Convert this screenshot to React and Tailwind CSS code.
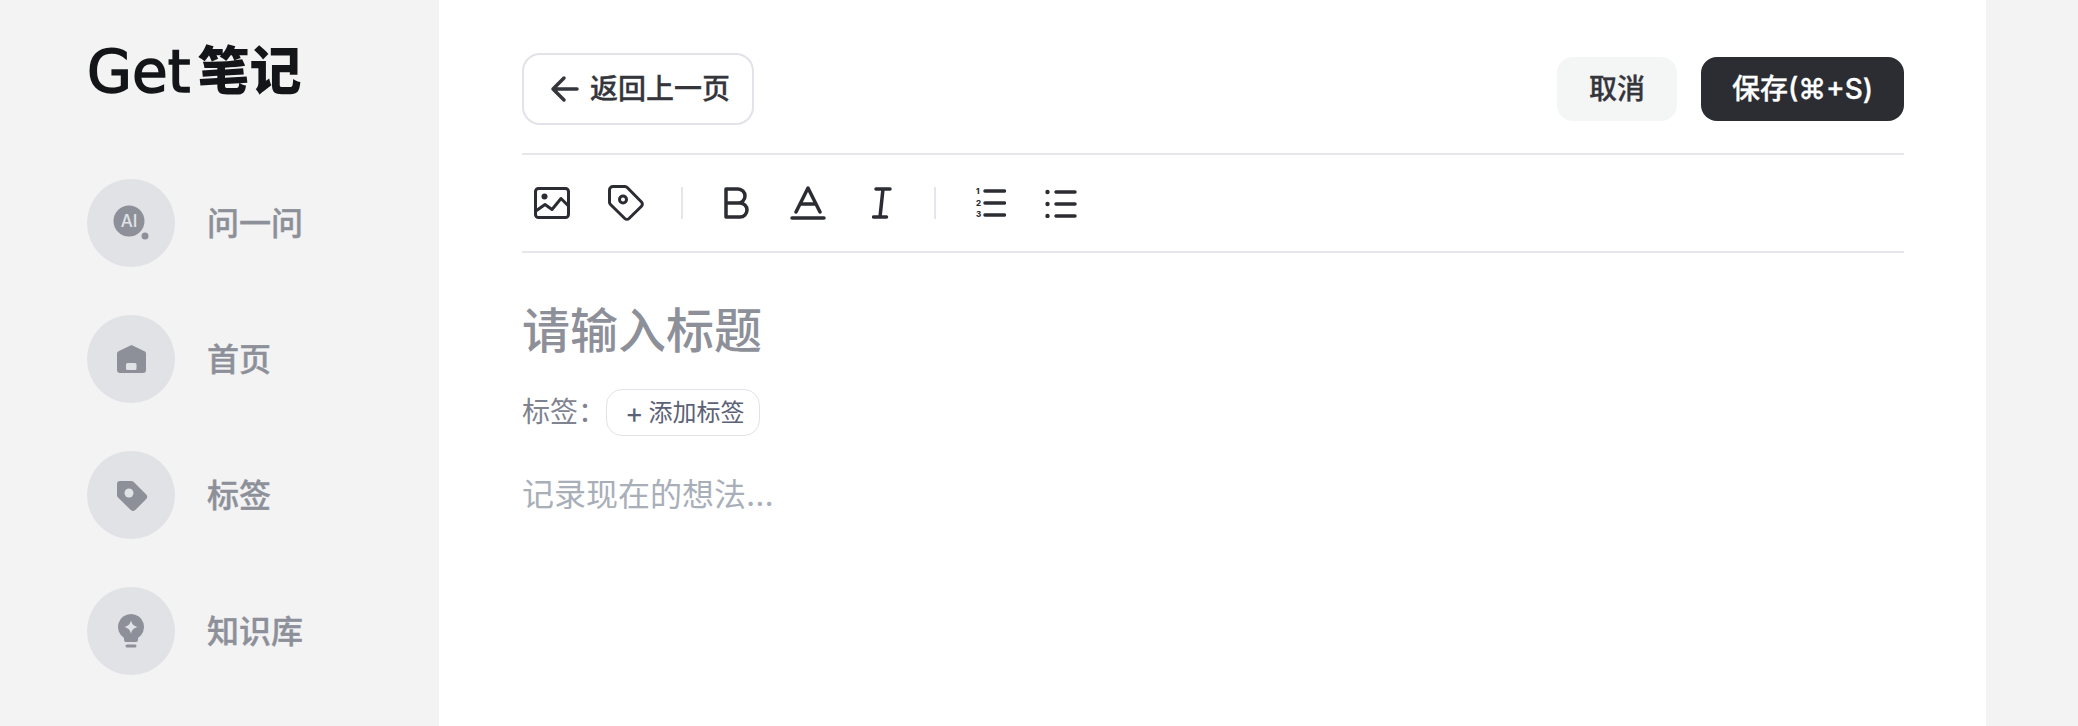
import React from 'react';

const navItems = [
  { label: '问一问', icon: <AiIcon /> },
  { label: '首页', icon: <HomeIcon /> },
  { label: '标签', icon: <TagFillIcon /> },
  { label: '知识库', icon: <BulbIcon /> },
];

function AiIcon() {
  return (
    <svg width="48" height="48" viewBox="0 0 48 48">
      <circle cx="22" cy="22" r="15.5" fill="#8d9099" />
      <text x="22" y="28" textAnchor="middle" fontSize="17" fontWeight="500" fontFamily="Inter, sans-serif" fill="#e1e2e6">AI</text>
      <circle cx="38" cy="37" r="3.5" fill="#8d9099" />
    </svg>
  );
}

function HomeIcon() {
  return (
    <svg width="48" height="48" viewBox="0 0 48 48">
      <path d="M24.5 10 38 16.500a2.500 2.500 0 0 1 1 2V35a3 3 0 0 1-3 3H13a3 3 0 0 1-3-3V18.500a2.500 2.500 0 0 1 1-2z" fill="#8d9099" />
      <rect x="19" y="28" width="10.500" height="7" rx="1.500" fill="#e1e2e6" />
    </svg>
  );
}

function TagFillIcon() {
  return (
    <svg width="48" height="48" viewBox="0 0 48 48">
      <path d="M13 10h11a4 4 0 0 1 3 1.200l12 12a3.500 3.500 0 0 1 0 5L28.500 38.800a3.500 3.500 0 0 1-5 0L11 26.500a4 4 0 0 1-1-3V13a3 3 0 0 1 3-3z" fill="#8d9099" />
      <circle cx="22" cy="22" r="4.500" fill="#e1e2e6" />
    </svg>
  );
}

function BulbIcon() {
  return (
    <svg width="48" height="48" viewBox="0 0 48 48">
      <path d="M24 7a13 13 0 0 1 7 24v2a2 2 0 0 1-2 2H19a2 2 0 0 1-2-2v-2a13 13 0 0 1 7-24z" fill="#8d9099" />
      <path d="M24 13c.7 4 2.200 5.500 6.500 7-4.300 1.500-5.800 3-6.500 7-.7-4-2.200-5.500-6.500-7 4.300-1.500 5.800-3 6.500-7z" fill="#e1e2e6" />
      <rect x="18.500" y="37.500" width="11" height="3" rx="1.500" fill="#8d9099" />
    </svg>
  );
}

function ImageIcon() {
  return (
    <svg width="36" height="32" viewBox="0 0 36 32" fill="none" stroke="#2b2d33" strokeWidth="3" strokeLinejoin="round" strokeLinecap="round">
      <rect x="1.500" y="1.500" width="33" height="29" rx="3" />
      <circle cx="10.500" cy="9.500" r="3" fill="#2b2d33" stroke="none" />
      <path d="M2.500 23.500 11 17.500l7 5 9-11 7 7" />
    </svg>
  );
}

function TagIcon() {
  return (
    <svg width="36" height="36" viewBox="0 0 36 36" fill="none" stroke="#2b2d33" strokeWidth="3" strokeLinejoin="round">
      <path d="M5 1.500h12a3 3 0 0 1 2.200 1L33.500 17a3 3 0 0 1 0 4.200L21 33.500a3 3 0 0 1-4.200 0L2.500 19.500a3 3 0 0 1-1-2.200V5A3.500 3.500 0 0 1 5 1.500z" />
      <circle cx="15" cy="14.500" r="3.500" />
    </svg>
  );
}

function BoldIcon() {
  return (
    <svg width="26" height="32" viewBox="0 0 26 32" fill="none" stroke="#2b2d33" strokeWidth="3.500" strokeLinejoin="round">
      <path d="M2 2h12a6.500 6.500 0 0 1 0 14H2zM2 16h14a7 7 0 0 1 0 14H2z" />
    </svg>
  );
}

function FontColorIcon() {
  return (
    <svg width="36" height="34" viewBox="0 0 36 34" fill="none" stroke="#2b2d33" strokeWidth="3.500" strokeLinecap="round" strokeLinejoin="round">
      <path d="M6 26 18 2l12 24M10 18h16" />
      <path d="M2 32h32" />
    </svg>
  );
}

function ItalicIcon() {
  return (
    <svg width="20" height="32" viewBox="0 0 20 32" fill="none" stroke="#2b2d33" strokeWidth="3.500" strokeLinecap="round">
      <path d="M4 2h14M11 2 8 30M1.500 30h13" />
    </svg>
  );
}

function OrderedIcon() {
  return (
    <svg width="30" height="34" viewBox="0 -1 30 34" fill="none" stroke="#2b2d33" strokeWidth="3.500" strokeLinecap="round">
      <text x="0" y="7" fontSize="8" fontWeight="800" fill="#2b2d33" stroke="none" fontFamily="Inter, sans-serif">1</text>
      <text x="0" y="19" fontSize="8" fontWeight="800" fill="#2b2d33" stroke="none" fontFamily="Inter, sans-serif">2</text>
      <text x="0" y="30" fontSize="8" fontWeight="800" fill="#2b2d33" stroke="none" fontFamily="Inter, sans-serif">3</text>
      <path d="M9 4h19.500M9 16h19.500M9 28h19.500" />
    </svg>
  );
}

function BulletIcon() {
  return (
    <svg width="32" height="30" viewBox="0 0 32 30" fill="none" stroke="#2b2d33" strokeWidth="3.500" strokeLinecap="round">
      <circle cx="2.500" cy="4" r="2.200" fill="#2b2d33" stroke="none" />
      <circle cx="2.500" cy="16" r="2.200" fill="#2b2d33" stroke="none" />
      <circle cx="2.500" cy="28" r="2.200" fill="#2b2d33" stroke="none" />
      <path d="M11 4h19M11 16h19M11 28h19" />
    </svg>
  );
}

export default function App() {
  return (
    <div className="flex h-[726px] overflow-hidden bg-[#f3f3f4] font-['Inter','Noto_Sans_CJK_SC',sans-serif]">
      {/* Sidebar */}
      <aside className="w-[439px] shrink-0 pl-[87px]">
        <div className="mt-[42px] flex h-[60px] items-center text-[#141518]">
          <span className="font-['DejaVu_Sans',sans-serif] text-[58px] leading-none [-webkit-text-stroke:1.5px_#141518]">Get</span>
          <span className="ml-[7px] text-[52px] leading-none font-black">笔记</span>
        </div>
        <nav className="mt-[77px] flex flex-col gap-[48px]">
          {navItems.map(item => (
            <div key={item.label} className="flex items-center gap-[32px]">
              <div className="flex h-[88px] w-[88px] items-center justify-center rounded-full bg-[#e1e2e6]">
                {item.icon}
              </div>
              <span className="pt-[2px] text-[32px] font-medium text-[#8d9099] [-webkit-text-stroke:0.4px_#8d9099]">{item.label}</span>
            </div>
          ))}
        </nav>
      </aside>

      {/* Editor */}
      <main className="w-[1547px] shrink-0 bg-white pr-[82px] pl-[83px]">
        <div className="flex h-[153px] items-start justify-between">
          <button className="mt-[53px] flex h-[72px] w-[232px] items-center gap-[10px] rounded-[18px] border-2 border-[#e2e3e8] pl-[26px] text-[28px] font-medium text-[#34363c] [-webkit-text-stroke:0.3px_#34363c]">
            <svg width="30" height="28" viewBox="0 0 30 28" fill="none" stroke="#34363c" strokeWidth="3.500" strokeLinecap="round" strokeLinejoin="round">
              <path d="M27 14H3M14 3 3 14l11 11" />
            </svg>
            返回上一页
          </button>
          <div className="mt-[57px] flex gap-[24px]">
            <button className="h-[64px] w-[120px] rounded-[16px] bg-[#f4f5f5] text-[28px] font-medium text-[#34363c] [-webkit-text-stroke:0.3px_#34363c]">取消</button>
            <button className="h-[64px] w-[203px] rounded-[16px] bg-[#2b2d33] text-[28px] font-medium text-white [-webkit-text-stroke:0.3px_#ffffff]">保存(⌘+S)</button>
          </div>
        </div>

        <div className="flex h-[100px] items-center border-y-2 border-[#e5e5eb] pl-[12px]">
          <ImageIcon />
          <span className="ml-[38px] flex"><TagIcon /></span>
          <span className="ml-[37px] h-[32px] w-[2px] bg-[#e5e5eb]" />
          <span className="ml-[41px] flex"><BoldIcon /></span>
          <span className="ml-[40px] flex"><FontColorIcon /></span>
          <span className="ml-[46px] flex"><ItalicIcon /></span>
          <span className="ml-[42px] h-[32px] w-[2px] bg-[#e5e5eb]" />
          <span className="ml-[40px] flex"><OrderedIcon /></span>
          <span className="ml-[39px] flex"><BulletIcon /></span>
        </div>

        <h1 className="mt-[46px] text-[48px] leading-[64px] font-medium text-[#8d9099]">请输入标题</h1>
        <div className="mt-[26px] flex items-center">
          <span className="w-[84px] text-[28px] leading-[47px] text-[#7f8490]">标签：</span>
          <button className="flex h-[47px] w-[154px] items-center gap-[5px] rounded-[16px] border border-[#e2e3e8] pl-[18px] text-[24px] text-[#5b6277]">
            <span className="text-[28px] leading-none">+</span>
            <span>添加标签</span>
          </button>
        </div>
        <p className="mt-[37px] text-[32px] leading-[44px] text-[#a9afb9]">记录现在的想法...</p>
      </main>

      <div className="flex-1" />
    </div>
  );
}
